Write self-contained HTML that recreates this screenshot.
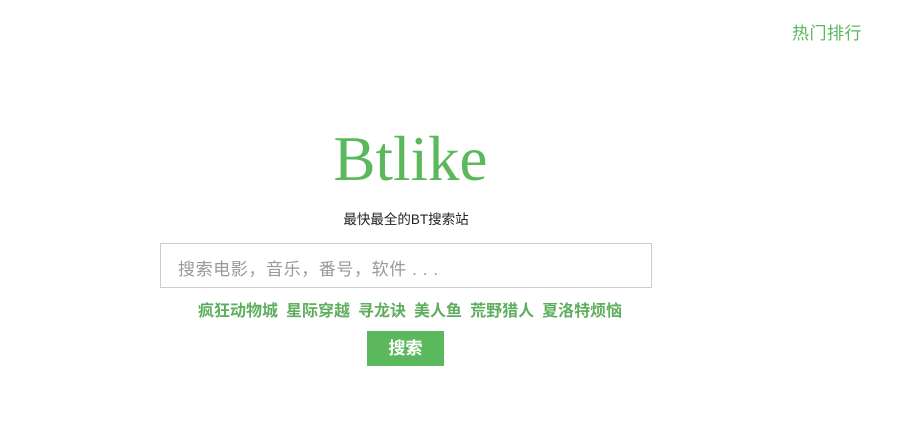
<!DOCTYPE html>
<html><head><meta charset="utf-8"><style>
body{margin:0;width:911px;height:438px;background:#fff;position:relative;font-family:"Liberation Sans","Noto Sans CJK SC",sans-serif;overflow:hidden}
.a{position:absolute}
#hot{left:792px;top:19px;font-size:17px;color:#5cb85c;letter-spacing:0.5px}
#logo{left:0;width:821px;text-align:center;top:121px;font-family:"Liberation Serif","DejaVu Serif",serif;font-size:63px;color:#5cb85c;line-height:76px}
#sub{left:0;width:812px;text-align:center;top:208px;font-size:13.5px;color:#222}
#box{left:160px;top:243px;width:490px;height:43px;border:1px solid #ccc;}
#box span{position:absolute;left:17px;top:11px;font-size:17px;color:#999;letter-spacing:0.6px}
#links{left:198px;top:297px;font-size:16px;color:#5fae5f;font-weight:bold;white-space:nowrap}
#links span{margin-right:8px}
#btn{left:367px;top:331px;width:77px;height:35px;background:#5cb85c;color:#fff;font-size:17px;font-weight:bold;text-align:center;line-height:35px}
</style></head><body>
<div class="a" id="hot">热门排行</div>
<div class="a" id="logo">Btlike</div>
<div class="a" id="sub">最快最全的BT搜索站</div>
<div class="a" id="box"><span>搜索电影，音乐，番号，软件 . . .</span></div>
<div class="a" id="links"><span>疯狂动物城</span><span>星际穿越</span><span>寻龙诀</span><span>美人鱼</span><span>荒野猎人</span><span>夏洛特烦恼</span></div>
<div class="a" id="btn">搜索</div>
</body></html>
